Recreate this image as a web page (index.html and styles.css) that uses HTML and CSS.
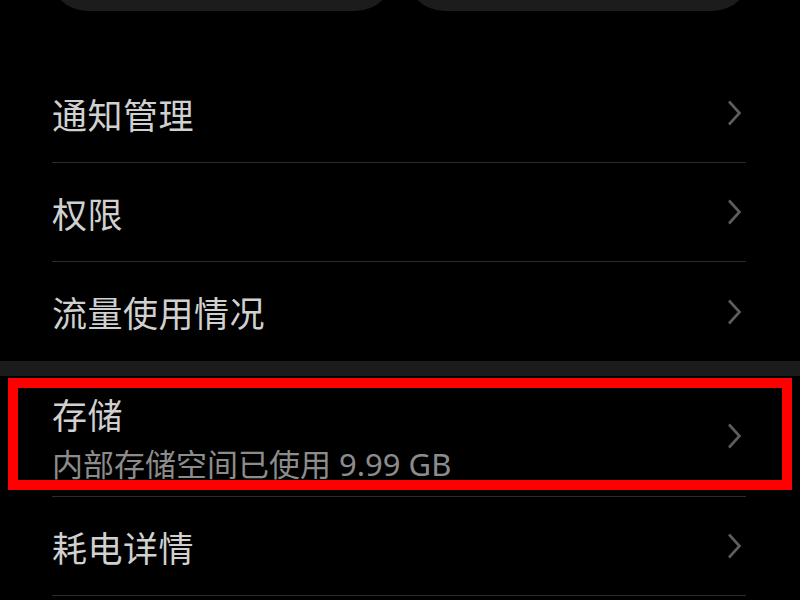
FILE: index.html
```html
<!DOCTYPE html>
<html lang="zh-CN">
<head>
<meta charset="utf-8">
<title>应用信息</title>
<link rel="stylesheet" href="styles.css">
</head>
<body>
<div class="screen">
  <div class="cards">
    <div class="card"></div>
    <div class="card"></div>
  </div>

  <div class="group group-top">
    <div class="row">
      <span class="title">通知管理</span>
      <svg class="chev" viewBox="0 0 16 28" width="16" height="28"><path d="M3 2.5 L13.5 14 L3 25.5" /></svg>
    </div>
    <div class="row">
      <span class="title">权限</span>
      <svg class="chev" viewBox="0 0 16 28" width="16" height="28"><path d="M3 2.5 L13.5 14 L3 25.5" /></svg>
    </div>
    <div class="row row-last">
      <span class="title">流量使用情况</span>
      <svg class="chev" viewBox="0 0 16 28" width="16" height="28"><path d="M3 2.5 L13.5 14 L3 25.5" /></svg>
    </div>
  </div>

  <div class="band"></div>

  <div class="group">
    <div class="row row-storage">
      <div class="texts">
        <span class="title">存储</span>
        <span class="sub">内部存储空间已使用 9.99 GB</span>
      </div>
      <svg class="chev" viewBox="0 0 16 28" width="16" height="28"><path d="M3 2.5 L13.5 14 L3 25.5" /></svg>
      <div class="highlight"></div>
    </div>
    <div class="row">
      <span class="title">耗电详情</span>
      <svg class="chev" viewBox="0 0 16 28" width="16" height="28"><path d="M3 2.5 L13.5 14 L3 25.5" /></svg>
    </div>
  </div>
</div>
</body>
</html>
```

FILE: styles.css
```css
html, body {
  margin: 0;
  padding: 0;
  background: #000;
}

body {
  font-family: "Noto Sans", "Noto Sans CJK SC", sans-serif;
  width: 800px;
  height: 600px;
  overflow: hidden;
}

.screen {
  display: flex;
  flex-direction: column;
}

.cards {
  display: flex;
  gap: 10px;
  margin: -69px 48px 0;
}

.card {
  flex: 1;
  height: 80px;
  background: #1c1c1c;
  border-radius: 44px;
}

.group-top {
  padding-top: 53px;
}

.row {
  position: relative;
  display: flex;
  align-items: center;
  justify-content: space-between;
  margin: 0 54px 0 52px;
  height: 98px;
  border-bottom: 1px solid #2c2c2c;
}

.row-last {
  height: 99px;
  border-bottom: none;
}

.row-storage {
  height: 120px;
}

.title {
  font-size: 35px;
  line-height: 40px;
  letter-spacing: 0.5px;
  color: #d0d0d0;
  padding-top: 5px;
}

.texts {
  display: flex;
  flex-direction: column;
  padding: 19px 0 12px;
}

.texts .title {
  padding-top: 0;
}

.texts .sub {
  margin-top: 8px;
  font-size: 31px;
  line-height: 40px;
  color: #8c8c8c;
}

.chev {
  flex: none;
  margin-right: 4px;
  fill: none;
  stroke: #5e5e5e;
  stroke-width: 2.6;
  stroke-linecap: butt;
  stroke-linejoin: miter;
}

.band {
  height: 15px;
  background: #1b1b1b;
}

.highlight {
  position: absolute;
  left: -44px;
  top: 2px;
  width: 764px;
  height: 92px;
  border: 10px solid #ff0000;
  pointer-events: none;
}
```
